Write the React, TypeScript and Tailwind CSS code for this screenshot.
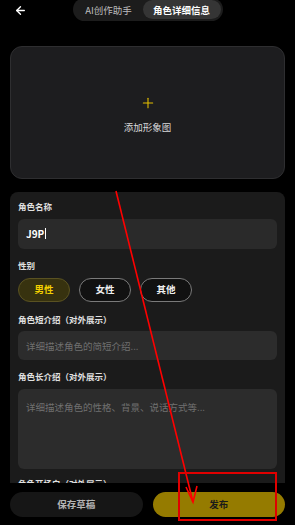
import React from "react";
import { ArrowLeft, Plus } from "lucide-react";

const font = { fontFamily: '"Noto Sans CJK SC", "Noto Sans", sans-serif' };

export default function App() {
  return (
    <div
      className="relative w-[295px] h-[525px] mx-auto bg-black flex flex-col overflow-hidden text-white"
      style={font}
    >
      {/* 顶部 */}
      <div className="relative h-[40px] shrink-0 flex justify-center">
        <ArrowLeft size={13} strokeWidth={2.5} className="absolute left-[14px] top-[4px] text-white" />
        <div className="mt-[-2px] h-[23px] w-[150px] rounded-full bg-[#1c1c1c] flex items-center p-[2px]">
          <div className="flex-1 text-center text-[9.5px] text-[#bdbdbd] pt-[1px]">AI创作助手</div>
          <div className="w-[78px] h-full rounded-full bg-[#353535] flex items-center justify-center text-[9.5px] font-bold text-white pt-[1px]">
            角色详细信息
          </div>
        </div>
      </div>

      {/* 内容 */}
      <div className="flex-1 overflow-hidden px-[10px] pt-[6px]">
        <div className="h-[133px] rounded-[12px] bg-[#1d1d1f] border border-[#2e2e30] flex flex-col items-center justify-center">
          <Plus size={16} strokeWidth={1.6} className="text-[#e5bf00] mt-[4px]" />
          <div className="mt-[9px] text-[9.5px] text-[#d8d8d8]">添加形象图</div>
        </div>

        <div className="mt-[13px] rounded-t-[8px] bg-[#1b1b1b] px-[8px] pt-[8px] pb-[20px]">
          <div className="text-[8.5px] font-bold text-[#e0e0e0]">角色名称</div>
          <div className="mt-[6px] h-[30px] rounded-[6px] bg-[#2a2a2a] flex items-center px-[8px]">
            <span className="text-[10px] font-bold text-white">J9P</span>
            <span className="w-px h-[11px] bg-white ml-[1px]" />
          </div>

          <div className="mt-[10px] text-[8.5px] font-bold text-[#e0e0e0]">性别</div>
          <div className="mt-[6px] flex gap-[9px]">
            <div className="w-[52px] h-[24px] rounded-full bg-[#37320f] border border-[#5a5222] flex items-center justify-center text-[9.5px] font-bold text-[#f2cf00]">
              男性
            </div>
            <div className="w-[52px] h-[24px] rounded-full bg-[#111] border border-[#7a7a7a] flex items-center justify-center text-[9.5px] font-bold text-[#eee]">
              女性
            </div>
            <div className="w-[52px] h-[24px] rounded-full bg-[#111] border border-[#7a7a7a] flex items-center justify-center text-[9.5px] font-bold text-[#eee]">
              其他
            </div>
          </div>

          <div className="mt-[11px] text-[8.5px] font-bold text-[#e0e0e0]">角色短介绍（对外展示）</div>
          <div className="mt-[6px] h-[29px] rounded-[6px] bg-[#2c2c2c] flex items-center px-[8px] text-[9.5px] text-[#707070]">
            详细描述角色的简短介绍...
          </div>

          <div className="mt-[10px] text-[8.5px] font-bold text-[#e0e0e0]">角色长介绍（对外展示）</div>
          <div className="mt-[6px] h-[80px] rounded-[6px] bg-[#2c2c2c] px-[8px] pt-[11px] text-[9.5px] text-[#707070]">
            详细描述角色的性格、背景、说话方式等...
          </div>

          <div className="mt-[8px] text-[8.5px] font-bold text-[#e0e0e0]">角色开场白（对外展示）</div>
        </div>
      </div>

      {/* 底部 */}
      <div className="h-[42px] shrink-0 bg-black flex items-center gap-[10px] px-[10px]">
        <button className="flex-1 h-[25px] rounded-full bg-[#161616] text-[9.5px] font-bold text-[#b5b5b5]">
          保存草稿
        </button>
        <button className="flex-1 h-[25px] rounded-full bg-[#957b00] text-[9.5px] font-bold text-[#1a1a1a]">
          发布
        </button>
      </div>

      {/* 标注 */}
      <svg className="absolute inset-0 pointer-events-none" width="295" height="525">
        <line x1="116" y1="191" x2="193" y2="502" stroke="#ff0000" strokeWidth="1.6" />
        <polyline points="186,487 193,502 197,486" fill="none" stroke="#ff0000" strokeWidth="1.6" />
        <rect x="179" y="473" width="97" height="47" fill="none" stroke="#e00000" strokeWidth="2" />
      </svg>
    </div>
  );
}
